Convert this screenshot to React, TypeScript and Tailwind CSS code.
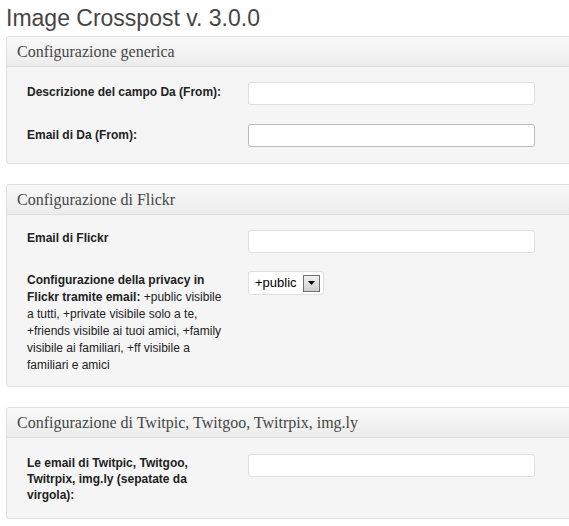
import React from 'react';

const labelCls = 'w-[241px] shrink-0 pl-[20px] pr-[21px] text-[12px] leading-[17px] text-[#222] font-["Liberation_Sans",Arial,sans-serif]';

const TextInput: React.FC<{ dark?: boolean }> = ({ dark }) => (
    <div className={`w-[287px] h-[23px] bg-white rounded-[3px] border ${dark ? 'border-[#bbbbbb]' : 'border-[#dfdfdf]'}`} />
);

const Panel: React.FC<{ title: string; children: React.ReactNode; className?: string }> = ({ title, children, className }) => (
    <div className={`ml-[6px] w-[600px] border border-[#dfdfdf] rounded-[3px] bg-[#f5f5f5] ${className ?? ''}`}>
        <div className="h-[30px] flex items-center pl-[10px] border-b border-[#dfdfdf] bg-gradient-to-b from-[#f9f9f9] to-[#ececec] rounded-t-[3px]">
            <span className="text-[16px] text-[#464646] font-['Liberation_Serif',Georgia,serif]">{title}</span>
        </div>
        {children}
    </div>
);

const PrivacySelect: React.FC = () => (
    <div className="w-[76px] h-[24px] bg-white border border-[#dfdfdf] rounded-[3px] flex items-center pl-[6px] pr-[3px] justify-between">
        <span className="text-[13px] text-black font-['Liberation_Sans',Arial,sans-serif]">+public</span>
        <div className="w-[17px] h-[17px] border border-[#707070] bg-gradient-to-b from-[#f2f2f2] to-[#cfcfcf] flex items-center justify-center">
            <svg width="7" height="4" viewBox="0 0 7 4">
                <path d="M0 0h7L3.5 4z" fill="#000" />
            </svg>
        </div>
    </div>
);

export default function App() {
    return (
        <div className="w-[569px] h-[526px] overflow-hidden bg-white font-['Liberation_Sans',Arial,sans-serif]">
            <h2 className="pl-[6px] pt-[4px] h-[36px] text-[23px] leading-[29px] text-[#464646]">Image Crosspost v. 3.0.0</h2>

            <Panel title="Configurazione generica">
                <div className="pt-[15px] pb-[16px] flex flex-col gap-[19px]">
                    <div className="flex">
                        <div className={`${labelCls} font-bold pt-[2px]`}>Descrizione del campo Da (From):</div>
                        <TextInput />
                    </div>
                    <div className="flex">
                        <div className={`${labelCls} font-bold pt-[3px]`}>Email di Da (From):</div>
                        <TextInput dark />
                    </div>
                </div>
            </Panel>

            <Panel title="Configurazione di Flickr" className="mt-[20px]">
                <div className="pt-[15px] pb-[12px] flex flex-col gap-[18px]">
                    <div className="flex">
                        <div className={`${labelCls} font-bold`}>Email di Flickr</div>
                        <TextInput />
                    </div>
                    <div className="flex">
                        <p className={`${labelCls} pt-[1px]`}>
                            <strong>Configurazione della privacy in Flickr tramite email:</strong> +public visibile a tutti, +private visibile solo a te, +friends visibile ai tuoi amici, +family visibile ai familiari, +ff visibile a familiari e amici
                        </p>
                        <PrivacySelect />
                    </div>
                </div>
            </Panel>

            <Panel title="Configurazione di Twitpic, Twitgoo, Twitrpix, img.ly" className="mt-[20px]">
                <div className="pt-[16px] pb-[15px] flex flex-col">
                    <div className="flex">
                        <div className={`${labelCls} font-bold pt-[1px] !leading-[16px]`}>Le email di Twitpic, Twitgoo, Twitrpix, img.ly (sepatate da virgola):</div>
                        <TextInput />
                    </div>
                </div>
            </Panel>
        </div>
    );
}
